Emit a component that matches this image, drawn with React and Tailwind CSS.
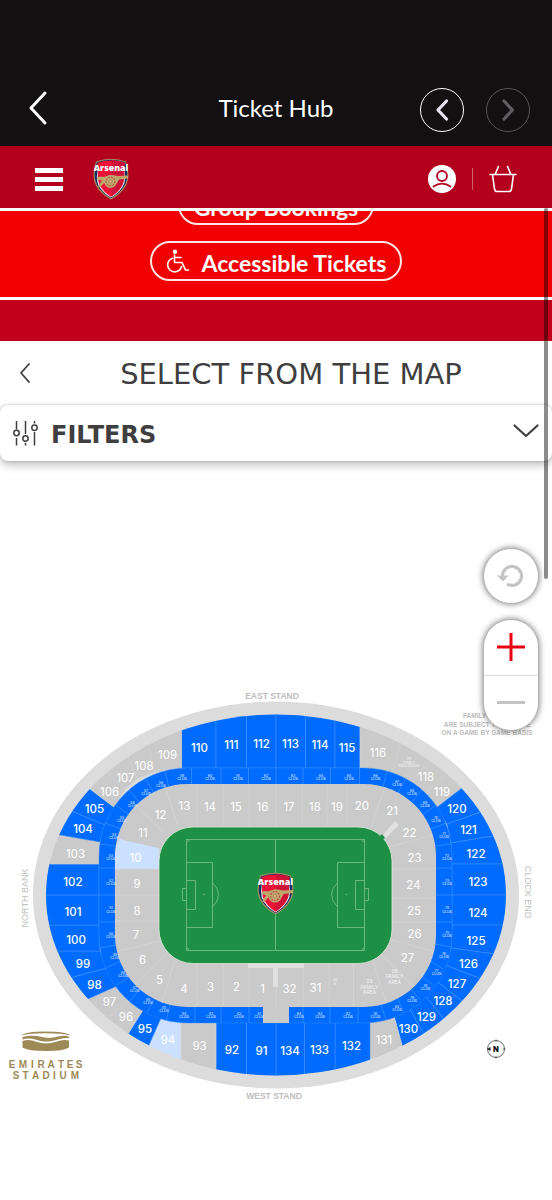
import React from "react";

const CX = 276;
const CY = 895;

// Boundaries of the outer tier, clockwise from the upper left: [inner x, inner y, outer x, outer y]
const outerEdges = [
  [181.5, 768, 181.5, 730],
  [216, 768, 216, 720],
  [246.5, 768, 246.5, 716],
  [276, 768, 276, 715],
  [305.5, 768, 305.5, 716],
  [335, 768, 335, 720],
  [360, 768, 360, 727],
  [392, 774, 400, 745],
  [412, 783, 436, 750],
  [425, 793, 447, 773],
  [436, 808, 462, 788],
  [447, 824, 478, 813],
  [451, 843, 493, 836],
  [452, 864, 503, 864],
  [452, 895, 506, 895],
  [452, 925, 503, 925],
  [451, 948, 495, 954],
  [445, 965, 479, 978],
  [435, 980, 462, 1001],
  [425, 995, 443, 1018],
  [410, 1009, 423, 1033],
  [394, 1016, 402, 1045],
  [370, 1022, 370, 1061],
  [335, 1022, 335, 1070],
  [304.5, 1022, 304.5, 1074],
  [276, 1022, 276, 1075],
  [246.5, 1022, 246.5, 1074],
  [216, 1022, 216, 1070],
  [181, 1022, 181, 1060],
  [161, 1018, 149, 1045],
  [143, 1010, 128, 1034],
  [131, 998, 108, 1018],
  [117, 986, 88, 999],
  [107, 968, 73, 977],
  [100, 951, 62, 951],
  [99, 925, 49, 925],
  [99, 895, 46, 895],
  [99, 864, 49, 864],
  [100, 842, 60, 835],
  [105, 825, 74, 812],
  [115, 808, 90, 789],
  [125, 789, 107, 772],
  [137, 779, 128, 757],
  [155, 772, 148, 745],
];

const BLUE = "#006cff";
const GREY = "#cacaca";
const PALE = "#cbe0ff";

// [label, x, y, fill] in the order of outerEdges
const outerSections = [
  ["110", 199.5, 748, BLUE],
  ["111", 231.5, 745, BLUE],
  ["112", 261.5, 743.5, BLUE],
  ["113", 290.5, 743.5, BLUE],
  ["114", 320, 745, BLUE],
  ["115", 347, 748, BLUE],
  ["116", 378, 753, GREY],
  ["", 409, 761, GREY],
  ["118", 426, 777, GREY],
  ["119", 442, 792, GREY],
  ["120", 457, 809, BLUE],
  ["121", 468.5, 830, BLUE],
  ["122", 476, 854, BLUE],
  ["123", 478, 882, BLUE],
  ["124", 478, 912.5, BLUE],
  ["125", 476, 940.5, BLUE],
  ["126", 468.5, 964, BLUE],
  ["127", 457, 984, BLUE],
  ["128", 443, 1001, BLUE],
  ["129", 426.5, 1016.5, BLUE],
  ["130", 408.5, 1028.5, BLUE],
  ["131", 384, 1039.5, GREY],
  ["132", 351.5, 1046, BLUE],
  ["133", 319.5, 1049.5, BLUE],
  ["134", 290, 1051, BLUE],
  ["91", 261.5, 1051, BLUE],
  ["92", 232, 1049.5, BLUE],
  ["93", 199.5, 1046, GREY],
  ["94", 168, 1040, PALE],
  ["95", 145, 1029, BLUE],
  ["96", 126, 1017, GREY],
  ["97", 109.5, 1002, GREY],
  ["98", 94.5, 984.5, BLUE],
  ["99", 83, 964, BLUE],
  ["100", 76, 940, BLUE],
  ["101", 73, 912, BLUE],
  ["102", 73, 881.5, BLUE],
  ["103", 75.5, 853.5, GREY],
  ["104", 83, 829, BLUE],
  ["105", 94.5, 809, BLUE],
  ["106", 109.5, 792, GREY],
  ["107", 125.5, 778, GREY],
  ["108", 144, 766, GREY],
  ["109", 167.5, 755, GREY],
];

const innerLabels = [
  ["9", 137, 884], ["8", 137, 910.5], ["7", 136, 935], ["6", 142.5, 960],
  ["5", 159.5, 979.5], ["4", 184, 988.5], ["3", 210.5, 987], ["2", 236.5, 987],
  ["1", 262.5, 989], ["32", 289.5, 989], ["31", 315.5, 987.5],
  ["10", 135.5, 857.5], ["11", 143, 832.5], ["12", 160.5, 814.5], ["13", 184.5, 806],
  ["14", 210, 807], ["15", 236, 807], ["16", 262.5, 807], ["17", 289, 807],
  ["18", 315, 807], ["19", 337, 807], ["20", 362, 806], ["21", 392, 811],
  ["22", 409.5, 832.5], ["23", 414.5, 857.5], ["24", 413.5, 885], ["25", 414, 911],
  ["26", 414.5, 934], ["27", 407.5, 957.5],
];

const innerLines = [
  [197, 784, 197, 827], [223, 784, 223, 827], [249, 784, 249, 827],
  [276, 784, 276, 827], [302, 784, 302, 827], [327, 784, 327, 827],
  [347, 784, 347, 827], [385, 787, 371, 828], [432, 835, 390, 847],
  [436, 869, 392, 869], [436, 898, 392, 898], [436, 922, 392, 922],
  [433, 951, 391, 940], [414, 987, 381, 954], [386, 1003, 373, 961],
  [353.5, 963, 353.5, 1007], [329, 963, 329, 1007], [303, 963, 303, 1007],
  [276, 963, 276, 1007], [249, 963, 249, 1007], [223, 963, 223, 1007],
  [197, 963, 197, 1007], [175, 960, 162, 1003], [168, 953, 135, 984],
  [160, 941, 118, 951], [159, 921, 115, 921], [159, 895, 115, 895],
  [159, 869, 115, 869], [136, 806, 169, 837], [165, 787, 179, 829],
];

const ringLines = [
  [191.5, 768, 191.5, 784], [221, 768, 221, 784], [248.5, 768, 248.5, 784],
  [276, 768, 276, 784], [303, 768, 303, 784], [330.5, 768, 330.5, 784],
  [359.5, 768, 359.5, 784], [387, 771, 383, 787], [406, 779, 397, 794],
  [422, 790, 411, 803], [435, 806, 422, 815], [446, 823, 431, 829],
  [451, 844, 435, 846], [452, 868, 436, 868], [452, 895, 436, 895],
  [452, 922, 436, 922], [450, 947, 435, 944], [443, 969, 430, 961],
  [433, 985, 421, 976], [420, 1000, 410, 988], [404, 1013, 397, 997],
  [386, 1020, 381, 1005], [358, 1023, 358, 1007], [330, 1023, 330, 1007],
  [303, 1023, 303, 1007], [249, 1023, 249, 1007], [221, 1023, 221, 1007],
  [195, 1023, 195, 1007], [166, 1021, 170, 1005], [147, 1013, 154, 999],
  [130, 1001, 140, 989], [117, 985, 129, 977], [106, 968, 121, 961],
  [100, 948, 116, 945], [99, 922, 115, 922], [99, 895, 115, 895],
  [99, 868, 115, 868], [100, 844, 116, 846], [105, 823, 121, 829],
  [116, 805, 129, 815], [129, 790, 140, 803], [145, 778, 154, 793],
  [165, 771, 169, 787],
];

const clubLabels = [
  [41, 259, 1015], [42, 239, 1015], [43, 211, 1015], [44, 184, 1015], [45, 164, 1009],
  [46, 148, 1001], [47, 134.5, 989], [48, 123, 974], [49, 115, 956], [50, 111, 935],
  [51, 111, 909.5], [52, 111, 882], [53, 111, 857], [54, 114, 836], [55, 122, 819],
  [56, 132.5, 804], [57, 146, 792], [58, 161, 784], [59, 182, 777], [60, 210, 777],
  [61, 238, 777], [62, 266, 777], [63, 293, 777], [64, 321, 777], [65, 349, 777],
  [66, 375.5, 777], [67, 397, 783], [68, 412, 792], [69, 425, 804], [70, 436, 819],
  [71, 444, 835], [72, 447, 857], [73, 447, 882], [74, 447, 909.5], [75, 447, 934],
  [76, 444, 955], [77, 436.5, 972], [78, 425.5, 987], [79, 412, 999], [80, 397, 1008],
  [81, 375.5, 1015], [82, 348, 1015], [83, 320, 1015], [84, 299, 1015],
];

const extend = ([x1, y1, x2, y2]) => [x2 + (x2 - x1) * 0.6, y2 + (y2 - y1) * 0.6];

function sectionPoints(i) {
  const a = outerEdges[i];
  const b = outerEdges[(i + 1) % outerEdges.length];
  return [[a[0], a[1]], extend(a), extend(b), [b[0], b[1]]].map((p) => p.join(",")).join(" ");
}

function Crest(props) {
  return (
    <svg viewBox="0 0 36 42" aria-hidden="true" {...props}>
      <path d="M3 3.5 Q18 -2 33 3.5 Q36 12 35.300 20 Q33.500 33 18 41.500 Q2.500 33 0.700 20 Q0 12 3 3.500Z" fill="#a89064" />
      <path d="M3.800 4.300 Q18 -.8 32.200 4.300 Q34.800 12 34.200 20 Q32.500 32 18 40.300 Q3.500 32 1.800 20 Q1.200 12 3.800 4.300Z" fill="#0c2c62" />
      <path d="M4.600 12 L31.400 12 Q33 19 31.500 25 Q28 34 18 39.600 Q8 34 4.500 25 Q3 19 4.600 12Z" fill="#f4e6e8" />
      <path d="M4.300 4.800 Q18 0 31.700 4.800 L31.200 13 Q32 20 30 25.500 Q27 33 18 38.800 Q9 33 6 25.500 Q4 20 4.800 13Z" fill="#ea1236" />
      <path d="M19 2 Q26 2.500 31.700 4.800 L31.200 13 Q32 20 30 25.500 Q27 33 19 38Z" fill="#cf1238" />
      <path d="M4.500 18.800 H11 Q18 16 25 18 L35 17.500 V20.500 L26 21.500 L24 25 H11 L7 29.500 L5 28.500 L9 22.500 L4.500 22Z" fill="#c0a56c" />
      <circle cx="17.500" cy="23.500" r="6.400" fill="#c0a56c" />
      <circle cx="17.500" cy="23.500" r="4.300" fill="none" stroke="#b5404a" strokeWidth="1" strokeDasharray="1.700 1.200" />
      <circle cx="17.500" cy="23.500" r="1.500" fill="#d6c08a" stroke="#94403a" strokeWidth=".4" />
      <text x="18" y="13" textAnchor="middle" fontSize="8.800" fontWeight="900" fill="#fff" className="font-['Open_Sans',sans-serif]">Arsenal</text>
    </svg>
  );
}

function Pitch() {
  return (
    <g fill="none" stroke="#6fbd7c" strokeWidth=".9">
      <rect x="159" y="827" width="233" height="136.500" rx="34" fill="#1e9045" stroke="#dcead9" strokeWidth=".8" />
      <rect x="186.500" y="839.500" width="178" height="111" />
      <path d="M275.500 839.500 V950.500" />
      <path d="M186.500 862.500 H212.500 V927.500 H186.500 M186.500 880.500 H195.500 V909.500 H186.500 M186.500 888.500 H182.500 V900.500 H186.500 M212.500 883 Q218.500 888 218.500 894.500 Q218.500 901 212.500 907" />
      <path d="M364.500 862.500 H337.500 V927.500 H364.500 M364.500 880.500 H355.500 V909.500 H364.500 M364.500 888.500 H368.500 V900.500 H364.500 M337.500 883 Q331.500 888 331.500 894.500 Q331.500 901 337.500 907" />
      <path d="M186.500 842 Q189 842 189 839.500 M364.500 842 Q362 842 362 839.500 M186.500 948 Q189 948 189 950.500 M364.500 948 Q362 948 362 950.500" />
      <circle cx="204" cy="894.500" r=".5" />
      <circle cx="346.500" cy="894.500" r=".5" />
    </g>
  );
}

function StadiumMap() {
  return (
    <svg viewBox="0 680 552 430" className="block w-full font-['Inter',sans-serif]" role="img" aria-label="Emirates Stadium seating map">
      <defs>
        <clipPath id="bowl">
          <ellipse cx={CX} cy={CY} rx="230" ry="180.500" />
        </clipPath>
      </defs>

      <g className="font-['Liberation_Sans',sans-serif]" fill="#bdbdbd" fontWeight="700" textAnchor="middle">
        <g fontSize="6.500">
          <text x="492" y="718">FAMILY SECTIONS</text>
          <text x="487" y="726.500">ARE SUBJECT TO CHANGE</text>
          <text x="487" y="735">ON A GAME BY GAME BASIS</text>
        </g>
        <g fontSize="8.500">
          <text x="272" y="699">EAST STAND</text>
          <text x="274" y="1098.500">WEST STAND</text>
          <text fontWeight="400" fontSize="9" transform="translate(28 898) rotate(-90)">NORTH BANK</text>
          <text fontWeight="400" fontSize="9" transform="translate(525 892) rotate(90)">CLOCK END</text>
        </g>
      </g>

      <ellipse cx={CX} cy={CY} rx="243" ry="193.500" fill="#dcdcdc" />
      <g clipPath="url(#bowl)">
        {outerSections.map(([label, , , fill], i) => (
          <polygon key={label + i} points={sectionPoints(i)} fill={fill} stroke={fill === BLUE ? "#3f8ffb" : "#d2d2d2"} strokeWidth=".6" />
        ))}
      </g>

      <rect x="99" y="768" width="353" height="255" rx="88" fill={BLUE} stroke="#3f8ffb" strokeWidth=".4" />
      <g stroke="#4b97fc" strokeWidth=".6">
        {ringLines.map(([x1, y1, x2, y2], i) => (
          <line key={i} x1={x1} y1={y1} x2={x2} y2={y2} />
        ))}
      </g>
      <rect x="115" y="784" width="321" height="223" rx="72" fill={GREY} />
      <rect x="263" y="1006" width="26" height="17" fill={GREY} />
      <path d="M119.500 839 L159.500 848.500 V869 H115 V856 Q115 847 119.500 839Z" fill={PALE} />
      <g stroke="#d6d6d6" strokeWidth=".7">
        {innerLines.map(([x1, y1, x2, y2], i) => (
          <line key={i} x1={x1} y1={y1} x2={x2} y2={y2} />
        ))}
      </g>
      <path d="M248 963 H304 V968 H278 V987 H273 V968 H248Z" fill="#e0e0e0" />
      <path d="M383 835 L395 821 L399 825 L386 838Z" fill="#e0e0e0" />

      <Pitch />
      <path d="M379 837 L382 834 L385 838 L382 840Z" fill="#1e9045" />
      <Crest x="257" y="872" width="37" height="43" />

      <g fill="#fff" textAnchor="middle" fontSize="11.500">
        {outerSections.map(([label, x, y, fill], i) => (
          <text key={i} x={x} y={y + 4} fontWeight={fill === BLUE ? 500 : 400}>{label}</text>
        ))}
        {innerLabels.map(([label, x, y]) => (
          <text key={label} x={x} y={y + 4}>{label}</text>
        ))}
      </g>

      <g fill="#e4efff" textAnchor="middle" fontSize="3.500">
        {clubLabels.map(([n, x, y]) => (
          <text key={n}>
            <tspan x={x} y={y - 0.5}>{n}</tspan>
            <tspan x={x} y={y + 3}>CLUB</tspan>
          </text>
        ))}
      </g>

      <g fill="#f2f2f2" textAnchor="middle" fontSize="5">
        <text>
          <tspan x="394.500" y="972.500">28</tspan>
          <tspan x="394.500" y="978">FAMILY</tspan>
          <tspan x="394.500" y="983.500">AREA</tspan>
        </text>
        <text>
          <tspan x="369.500" y="983">29</tspan>
          <tspan x="369.500" y="988.500">FAMILY</tspan>
          <tspan x="369.500" y="994">AREA</tspan>
        </text>
        <text fontSize="3.800">
          <tspan x="335" y="981">30</tspan>
          <tspan x="335" y="984.500">R</tspan>
        </text>
        <text fontSize="3.500">
          <tspan x="409" y="760">117</tspan>
          <tspan x="409" y="763.500">FAMILY</tspan>
          <tspan x="409" y="767">ENCLOSURE</tspan>
        </text>
      </g>

      <g fill="#9e8a57">
        <path d="M21 1035.500 Q26 1031.500 45 1031.500 Q66 1031.500 70.500 1035.500 Q62 1033.300 45 1033.300 Q29 1033.300 21 1035.500Z" />
        <path d="M22.500 1037 Q31 1034.500 41 1036.800 Q49 1039 57 1036.800 Q65 1034.800 69 1036.800 V1038 Q63 1037.500 56 1040 Q46 1043 37 1040 Q29 1037.500 22.500 1039.500Z" />
        <path d="M22.500 1041 Q29 1038.800 37 1042 Q46 1045 56 1041.800 Q63 1039 69 1040.500 V1047.500 Q64 1051 46 1051 Q28 1051 22.500 1047.500Z" />
        <g className="font-['Liberation_Sans',sans-serif]" fontSize="10" fontWeight="700" textAnchor="middle">
          {"EMIRATES".split("").map((c, i) => (
            <text key={i} x={[12, 23, 32.5, 41, 51, 61, 70, 79][i]} y="1068">{c}</text>
          ))}
          {"STADIUM".split("").map((c, i) => (
            <text key={i} x={[16, 25.5, 35.5, 46, 54.5, 63, 75][i]} y="1079">{c}</text>
          ))}
        </g>
      </g>

      <circle cx="496" cy="1049" r="8.500" fill="none" stroke="#444" strokeWidth=".8" />
      <path d="M496 1039.500 V1042 M496 1056 V1058.500 M503 1049 H505.500" stroke="#444" strokeWidth=".8" />
      <path d="M487 1049 L490.500 1047 V1051Z" fill="#222" />
      <text x="496" y="1052" textAnchor="middle" fontSize="7.500" fontWeight="900" fill="#111">N</text>
    </svg>
  );
}

export default function App() {
  return (
    <div className="relative min-h-screen overflow-hidden bg-white font-['Lato',sans-serif]">
      <header className="relative flex h-[146px] items-end justify-between bg-[#121011] px-[22px] pb-[14px] text-white">
        <button type="button" aria-label="Back" className="flex h-12 w-8 items-center justify-center">
          <svg viewBox="0 0 20 36" className="h-9 w-5" fill="none" stroke="currentColor" strokeWidth="3" strokeLinecap="round" strokeLinejoin="round">
            <path d="M17 3 L3 18 L17 33" />
          </svg>
        </button>
        <h1 className="pointer-events-none absolute inset-x-0 bottom-4 text-center text-2xl leading-[44px]">Ticket Hub</h1>
        <nav className="flex gap-[22px]">
          <button type="button" aria-label="Previous page" className="flex size-11 items-center justify-center rounded-full border border-white">
            <svg viewBox="0 0 14 24" className="h-6 w-3.5" fill="none" stroke="#e8e5f2" strokeWidth="3.200" strokeLinecap="round" strokeLinejoin="round">
              <path d="M11.500 3 L3 12 L11.500 21" />
            </svg>
          </button>
          <button type="button" aria-label="Next page" disabled className="flex size-11 items-center justify-center rounded-full border border-[#56565a]">
            <svg viewBox="0 0 14 24" className="h-6 w-3.5" fill="none" stroke="#5e5d62" strokeWidth="3.200" strokeLinecap="round" strokeLinejoin="round">
              <path d="M3 3 L11.500 12 L3 21" />
            </svg>
          </button>
        </nav>
      </header>

      <div className="flex h-[62px] items-center bg-[#b2001d] px-[35px] pt-1">
        <button type="button" aria-label="Menu" className="flex w-7 flex-col gap-1">
          <span className="h-[5px] bg-white" />
          <span className="h-[5px] bg-white" />
          <span className="h-[5px] bg-white" />
        </button>
        <a href="#home" aria-label="Arsenal home" className="ml-[30px]">
          <Crest className="h-[42px] w-9" />
        </a>
        <button type="button" aria-label="Account" className="ml-auto">
          <svg viewBox="0 0 28 28" className="size-7">
            <circle cx="14" cy="14" r="14" fill="#fff" />
            <g fill="none" stroke="#b2001d" strokeWidth="1.800" strokeLinecap="round">
              <circle cx="14" cy="11" r="5" />
              <path d="M5.500 21.500 Q9.500 18.700 14 18.700 Q18.500 18.700 22.500 21.500" />
            </g>
          </svg>
        </button>
        <span className="ml-4 h-[22px] w-px bg-[#d0606c]" />
        <button type="button" aria-label="Basket" className="ml-4">
          <svg viewBox="0 0 28 28" className="size-7" fill="none" stroke="#fff" strokeWidth="1.600" strokeLinecap="round" strokeLinejoin="round">
            <path d="M1 9.500 H27 M3.500 9.500 L5.500 24 Q6 26.500 8 26.500 H20 Q22 26.500 22.500 24 L24.500 9.500 M6.500 8.500 L9.500 1.500 M21.500 8.500 L18.500 1.500" />
          </svg>
        </button>
      </div>

      <div className="flex h-[92px] flex-col items-center justify-end gap-4 overflow-hidden border-y-[3px] border-white bg-[#f00000] pb-4 text-[23px] font-bold text-white">
        <a href="#group-bookings" className="flex h-10 shrink-0 items-center rounded-full border-2 border-white/90 px-[14px] pt-1">Group Bookings</a>
        <a href="#accessible-tickets" className="flex h-10 shrink-0 items-center gap-3 rounded-full border-2 border-white/90 px-[14px] pt-1">
          <svg viewBox="0 0 24 24" className="-mt-1 size-6" fill="none" stroke="currentColor" strokeWidth="1.600" strokeLinecap="round" strokeLinejoin="round">
            <circle cx="9" cy="2.800" r="2.200" fill="currentColor" stroke="none" />
            <path d="M8.500 6 V13.500 H16 L19.500 21 H22.500 M8.500 8.500 H15 M6.500 9.200 A7 7 0 1 0 15.500 17.500" />
          </svg>
          Accessible Tickets
        </a>
      </div>
      <div className="h-[41px] bg-[#c3001b]" />

      <div className="flex h-16 items-center px-5 pt-1 text-[#3f3f3f]">
        <button type="button" aria-label="Go back" className="-mt-1 w-2.5">
          <svg viewBox="0 0 10 20" className="h-5 w-2.5" fill="none" stroke="currentColor" strokeWidth="1.800" strokeLinecap="round" strokeLinejoin="round">
            <path d="M9 1 L1 10 L9 19" />
          </svg>
        </button>
        <h2 className="flex-1 whitespace-nowrap pl-5 text-center font-['DejaVu_Sans',sans-serif] text-[29px]">SELECT FROM THE MAP</h2>
      </div>

      <button type="button" aria-expanded="false" className="flex h-14 w-full items-center rounded-lg px-[13px] text-[#3f3f3f] shadow-[0_4px_10px_rgba(0,0,0,0.25),0_0_3px_rgba(0,0,0,0.2)]">
        <svg viewBox="0 0 26 26" className="size-[26px]" fill="none" stroke="currentColor" strokeWidth="1.500">
          <path d="M3.500 1 V9.500 M3.500 18 V25.500 M12.500 1 V14 M12.500 23 V25.500 M21.500 1 V3.500 M21.500 12 V25.500" />
          <circle cx="3.500" cy="13" r="2.700" />
          <circle cx="12.500" cy="18.500" r="2.700" />
          <circle cx="21.500" cy="7.700" r="2.700" />
        </svg>
        <span className="ml-3 pt-1 font-['DejaVu_Sans',sans-serif] text-2xl font-bold">FILTERS</span>
        <svg viewBox="0 0 26 14" className="-mt-1 ml-auto h-3.5 w-[26px]" fill="none" stroke="currentColor" strokeWidth="2.200" strokeLinecap="round" strokeLinejoin="round">
          <path d="M1.500 1.500 L13 12 L24.500 1.500" />
        </svg>
      </button>

      <main className="relative pt-[219px]">
        <StadiumMap />
        <div className="absolute right-[13px] top-[87px] flex flex-col gap-[15px]">
          <button type="button" aria-label="Reset map" className="flex size-14 items-center justify-center rounded-full border border-[#b5b5b5] bg-white shadow-[0_0_6px_rgba(0,0,0,0.55)]">
            <svg viewBox="0 0 28 26" className="h-[26px] w-7">
              <path d="M5.500 13 A9.500 9.500 0 1 1 10 21" fill="none" stroke="#c4c4c4" strokeWidth="3.200" />
              <path d="M0 12.500 H11.500 L6 18.500Z" fill="#c4c4c4" />
            </svg>
          </button>
          <div className="flex h-28 w-14 flex-col overflow-hidden rounded-full border border-[#b5b5b5] bg-white shadow-[0_0_6px_rgba(0,0,0,0.55)]">
            <button type="button" aria-label="Zoom in" className="flex flex-1 items-center justify-center border-b border-[#dcdcdc]">
              <svg viewBox="0 0 28 28" className="size-7" stroke="#ea0010" strokeWidth="3">
                <path d="M14 0 V28 M0 14 H28" />
              </svg>
            </button>
            <button type="button" aria-label="Zoom out" className="flex flex-1 items-center justify-center">
              <span className="h-[3px] w-7 bg-[#c4c4c4]" />
            </button>
          </div>
        </div>
      </main>

      <div aria-hidden="true" className="pointer-events-none absolute right-1 top-[208px] h-[371px] w-1 rounded-full bg-black/45" />
    </div>
  );
}
